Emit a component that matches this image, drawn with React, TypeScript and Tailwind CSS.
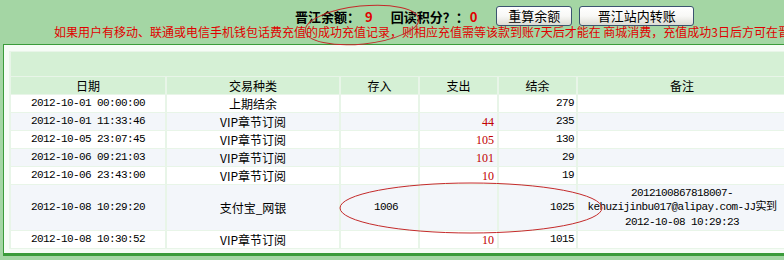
import React from 'react';

const cjk = "font-['Noto_Sans_CJK_SC',sans-serif]";
const mono = "font-['Liberation_Mono','Noto_Sans_CJK_SC',monospace] text-[11px] tracking-[-0.6px]";
const serif = "font-['Liberation_Serif',serif] text-[12px] text-[#c00000]";

type Row = {
  date: string;
  kind: string;
  inAmt?: string;
  out?: string;
  bal: string;
  note?: string[];
};

const rows: Row[] = [
  { date: '2012-10-01 00:00:00', kind: '上期结余', bal: '279' },
  { date: '2012-10-01 11:33:46', kind: 'VIP章节订阅', out: '44', bal: '235' },
  { date: '2012-10-05 23:07:45', kind: 'VIP章节订阅', out: '105', bal: '130' },
  { date: '2012-10-06 09:21:03', kind: 'VIP章节订阅', out: '101', bal: '29' },
  { date: '2012-10-06 23:43:00', kind: 'VIP章节订阅', out: '10', bal: '19' },
  {
    date: '2012-10-08 10:29:20',
    kind: '支付宝_网银',
    inAmt: '1006',
    bal: '1025',
    note: ['2012100867818007-', 'kehuzijinbu017@alipay.com-JJ实到', '2012-10-08 10:29:23'],
  },
  { date: '2012-10-08 10:30:52', kind: 'VIP章节订阅', out: '10', bal: '1015' },
];

const headers = ['日期', '交易种类', '存入', '支出', '结余', '备注'];

function XpButton({ children, w }: { children: React.ReactNode; w: string }) {
  return (
    <button
      className={`${w} h-[20px] rounded-[3px] border border-[#3b5470] bg-gradient-to-b from-white via-[#f8f8f6] to-[#dcdcd4] text-[13px] leading-none text-black ${cjk}`}
    >
      {children}
    </button>
  );
}

function Cell({ className, children }: { className?: string; children?: React.ReactNode }) {
  return <div className={`flex items-center overflow-hidden whitespace-nowrap leading-none ${className ?? ''}`}>{children}</div>;
}

export default function App() {
  return (
    <div className="relative w-[784px] h-[260px] overflow-hidden bg-[#a4d6a4]">
      {/* top strip */}
      <div className="h-[44px] pt-[5px]">
        <div className="flex items-center h-[20px] pl-[295px] whitespace-nowrap">
          <span className={`pt-[4px] text-[13px] font-bold text-black ${cjk}`}>晋江余额：</span>
          <span className={`pt-[4px] ml-[5px] text-[13px] font-bold text-[#e00000] ${cjk}`}>9</span>
          <span className={`pt-[4px] ml-[18px] text-[13px] font-bold text-black ${cjk}`}>回读积分？：</span>
          <span className={`pt-[4px] ml-[1px] text-[13px] font-bold text-[#e00000] ${cjk}`}>0</span>
          <div className="ml-[19px]">
            <XpButton w="w-[76px]">重算余额</XpButton>
          </div>
          <div className="ml-[7px]">
            <XpButton w="w-[115px]">晋江站内转账</XpButton>
          </div>
        </div>
        <div
          className={`pl-[54px] h-[14px] text-[12px] leading-[14px] text-[#e00000] whitespace-nowrap overflow-hidden ${cjk}`}
        >
          如果用户有移动、联通或电信手机钱包话费充值的成功充值记录，则相应充值需等该款到账7天后才能在 商城消费，充值成功3日后方可在晋江站内转账
        </div>
      </div>

      {/* content box */}
      <div className="ml-[3px] w-[820px] border-l border-t border-b-[3px] border-[#3a9b3a] bg-[#f6fcf6] pt-[6px] pl-[5px] pb-[4px]">
        <div
          className={`grid w-[779px] grid-cols-[154px_172px_77px_77px_77px_208px] gap-x-[2px] gap-y-px px-[2px] py-px bg-[#e8f5e8] text-[12px] text-black ${cjk}`}
        >
          <div className="col-span-6 h-[24px] bg-[#d5f0d5]" />
          {headers.map((h) => (
            <Cell key={h} className="h-[17px] justify-center bg-[#d5f0d5]">
              {h}
            </Cell>
          ))}
          {rows.map((r, i) => {
            const bg = i % 2 === 1 ? 'bg-[#f3f6fa]' : 'bg-white';
            const h = r.note ? 'h-[45px]' : 'h-[17px]';
            return (
              <React.Fragment key={i}>
                <Cell className={`${h} ${bg} justify-center ${mono}`}>{r.date}</Cell>
                <Cell className={`${h} ${bg} justify-center`}>{r.kind}</Cell>
                <Cell className={`${h} ${bg} justify-end pr-[20px] ${mono}`}>{r.inAmt}</Cell>
                <Cell className={`${h} ${bg} justify-end pr-[3px] ${serif}`}>{r.out}</Cell>
                <Cell className={`${h} ${bg} justify-end pr-[2px] ${mono}`}>{r.bal}</Cell>
                <Cell className={`${h} ${bg} justify-center`}>
                  {r.note && (
                    <div className={`flex flex-col items-center leading-[14.5px] ${mono}`}>
                      {r.note.map((l) => (
                        <div key={l}>{l}</div>
                      ))}
                    </div>
                  )}
                </Cell>
              </React.Fragment>
            );
          })}
        </div>
      </div>

      {/* hand-drawn annotations */}
      <svg className="absolute left-0 top-0 pointer-events-none" width="784" height="260">
        <ellipse
          cx="362"
          cy="25"
          rx="57"
          ry="19"
          transform="rotate(-6 362 25)"
          fill="none"
          stroke="#c42a2a"
          strokeWidth="1"
        />
        <ellipse cx="471" cy="208" rx="131" ry="25" fill="none" stroke="#c42a2a" strokeWidth="1" />
      </svg>
    </div>
  );
}
